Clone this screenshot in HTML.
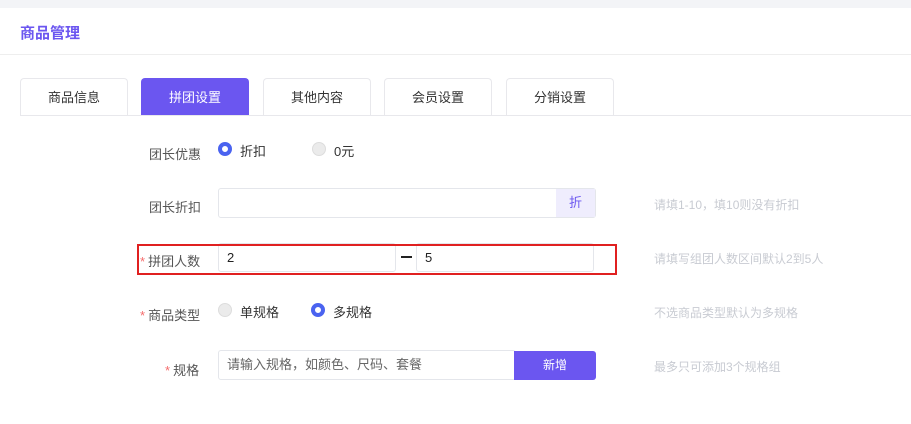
<!DOCTYPE html>
<html><head><meta charset="utf-8"><style>
*{box-sizing:border-box;margin:0;padding:0}
body{width:911px;height:424px;background:#fff;font-family:"Liberation Sans","Noto Sans CJK SC",sans-serif;font-size:13px;color:#333;position:relative;overflow:hidden}
.a{position:absolute}
.tab{position:absolute;top:78px;height:38px;border:1px solid #e8e8ec;border-bottom:none;border-radius:4px 4px 0 0;text-align:center;line-height:38px;font-size:13px;color:#333;background:#fff}
.lbl{position:absolute;font-size:13px;color:#555;}
.star{color:#f56c6c;margin-right:3px}
.inp{position:absolute;border:1px solid #e4e6eb;border-radius:3px;background:#fff;font-size:13px;padding-left:8px}
.hint{position:absolute;left:654px;font-size:12px;color:#c8cbd2}
.r{position:absolute;width:14px;height:14px;border-radius:50%}
.on{border:4px solid #4a63f0;background:#fff}
.off{background:#ebebeb;border:1px solid #ddd}
</style></head><body>
<div class="a" style="left:0;top:0;width:911px;height:8px;background:#f3f4f7"></div>
<div class="a" style="left:20px;top:22px;font-size:15px;font-weight:bold;color:#6b56f0">商品管理</div>
<div class="a" style="left:0;top:54px;width:911px;height:1px;background:#eee"></div>
<div class="tab" style="left:20px;width:108px">商品信息</div>
<div class="tab" style="left:141px;width:108px;background:#6b56f0;border-color:#6b56f0;color:#fff">拼团设置</div>
<div class="tab" style="left:263px;width:108px">其他内容</div>
<div class="tab" style="left:384px;width:108px">会员设置</div>
<div class="tab" style="left:506px;width:108px">分销设置</div>
<div class="a" style="left:20px;top:115px;width:891px;height:1px;background:#e8e8ec"></div>

<div class="lbl" style="left:149px;top:144px">团长优惠</div>
<div class="r on" style="left:218px;top:142px"></div><div class="a" style="left:240px;top:141px">折扣</div>
<div class="r off" style="left:312px;top:142px"></div><div class="a" style="left:334px;top:141px">0元</div>

<div class="lbl" style="left:149px;top:197px">团长折扣</div>
<div class="inp" style="left:218px;top:188px;width:378px;height:30px"></div>
<div class="a" style="left:556px;top:189px;width:39px;height:28px;background:#efedfd;color:#6b56f0;text-align:center;line-height:28px">折</div>
<div class="hint" style="top:196px">请填1-10，填10则没有折扣</div>

<div class="lbl" style="left:140px;top:251px"><span class="star">*</span>拼团人数</div>
<div class="inp" style="left:218px;top:243px;width:178px;height:29px;line-height:27px;color:#222">2</div>
<div class="a" style="left:401px;top:256px;width:11px;height:2px;background:#222"></div>
<div class="inp" style="left:416px;top:243px;width:178px;height:29px;line-height:27px;color:#222">5</div>
<div class="a" style="left:137px;top:244px;width:480px;height:31px;border:2px solid #e02020;z-index:5"></div>
<div class="hint" style="top:250px">请填写组团人数区间默认2到5人</div>

<div class="lbl" style="left:140px;top:305px"><span class="star">*</span>商品类型</div>
<div class="r off" style="left:218px;top:303px"></div><div class="a" style="left:240px;top:302px">单规格</div>
<div class="r on" style="left:311px;top:303px"></div><div class="a" style="left:333px;top:302px">多规格</div>
<div class="hint" style="top:304px">不选商品类型默认为多规格</div>

<div class="lbl" style="left:165px;top:360px"><span class="star">*</span>规格</div>
<div class="inp" style="left:218px;top:350px;width:298px;height:30px;line-height:28px;color:#666">请输入规格，如颜色、尺码、套餐</div>
<div class="a" style="left:514px;top:351px;width:82px;height:29px;background:#6b56f0;border-radius:0 3px 3px 0;color:#fff;text-align:center;line-height:29px;font-size:12px">新增</div>
<div class="hint" style="top:358px">最多只可添加3个规格组</div>
</body></html>
